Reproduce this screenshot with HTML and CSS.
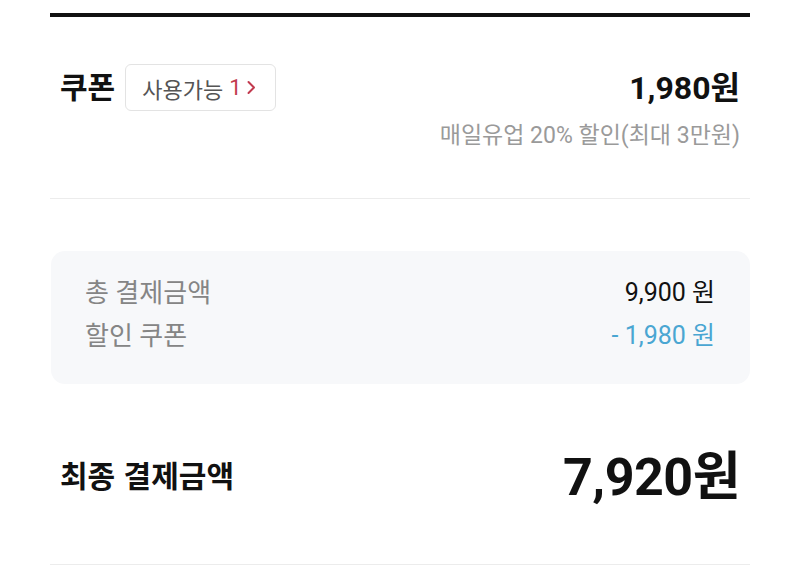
FILE: index.html
```html
<!DOCTYPE html>
<html lang="ko">
<head>
<meta charset="utf-8">
<link rel="stylesheet" href="styles.css">
</head>
<body>
<div class="page">
  <div class="top-line"></div>
  <section class="coupon">
    <div class="coupon-row">
      <div class="coupon-left">
        <span class="coupon-title">쿠폰</span>
        <button class="coupon-btn" type="button">사용가능 <span class="count">1</span><svg class="chev" width="9" height="15" viewBox="0 0 9 15"><polyline points="1.5,2 7,7.5 1.5,13" fill="none" stroke="#c23a4e" stroke-width="2" stroke-linecap="round" stroke-linejoin="round"/></svg></button>
      </div>
      <div class="coupon-price">1,980원</div>
    </div>
    <div class="coupon-desc">매일유업 20% 할인(최대 3만원)</div>
  </section>
  <section class="summary">
    <div class="sum-row">
      <span class="sum-label">총 결제금액</span>
      <span class="sum-value">9,900 원</span>
    </div>
    <div class="sum-row">
      <span class="sum-label">할인 쿠폰</span>
      <span class="sum-value discount">- 1,980 원</span>
    </div>
  </section>
  <section class="final">
    <span class="final-label">최종 결제금액</span>
    <span class="final-price">7,920원</span>
  </section>
</div>
</body>
</html>
```
FILE: styles.css
```css
* { box-sizing: border-box; }
html, body { margin: 0; padding: 0; background: #fff; }
body {
  font-family: Roboto, "Noto Sans CJK KR", sans-serif;
  color: #111;
}
.page {
  width: 700px;
  margin: 0 50px;
}
.top-line {
  margin-top: 13px;
  height: 4px;
  background: #111;
}
.coupon {
  padding: 47px 10px 48px;
  border-bottom: 1px solid #ececec;
}
.coupon-row {
  display: flex;
  justify-content: space-between;
  align-items: center;
  height: 47px;
}
.coupon-left {
  display: flex;
  align-items: center;
  gap: 10px;
}
.coupon-title {
  font-family: "Noto Sans CJK KR", sans-serif;
  font-weight: 700;
  font-size: 30px;
  line-height: 36px;
  position: relative;
  top: -3px;
}
.coupon-btn {
  display: flex;
  align-items: center;
  height: 47px;
  padding: 0 19px 0 16px;
  border: 1px solid #e3e3e3;
  border-radius: 6px;
  background: #fff;
  font-family: "Noto Sans CJK KR", sans-serif;
  font-size: 22px;
  color: #555;
}
.coupon-btn .count {
  font-family: Roboto, sans-serif;
  color: #c23a4e;
  margin-left: 6px;
  margin-right: 5px;
}
.coupon-price {
  font-weight: 700;
  font-size: 32px;
  line-height: 36px;
}
.coupon-desc {
  margin-top: 11px;
  text-align: right;
  font-size: 23px;
  line-height: 28px;
  color: #9a9a9a;
}
.summary {
  margin-top: 52px;
  margin-left: 1px;
  background: #f7f8fa;
  border-radius: 14px;
  padding: 26px 35px 32px 34px;
  display: flex;
  flex-direction: column;
  gap: 11px;
}
.sum-row {
  display: flex;
  justify-content: space-between;
  align-items: center;
  line-height: 32px;
}
.sum-label {
  font-size: 26px;
  color: #858585;
}
.sum-value {
  font-size: 25px;
  color: #111;
}
.sum-value.discount { color: #4aa6d2; }
.final {
  display: flex;
  justify-content: space-between;
  align-items: center;
  margin-top: 64px;
  padding: 0 10px 56px;
  border-bottom: 1px solid #ececec;
}
.final-label {
  font-family: "Noto Sans CJK KR", sans-serif;
  font-weight: 700;
  font-size: 30px;
  line-height: 60px;
  position: relative;
  top: -4px;
}
.final-price {
  font-weight: 700;
  font-size: 52px;
  line-height: 60px;
  letter-spacing: -0.5px;
}
```
